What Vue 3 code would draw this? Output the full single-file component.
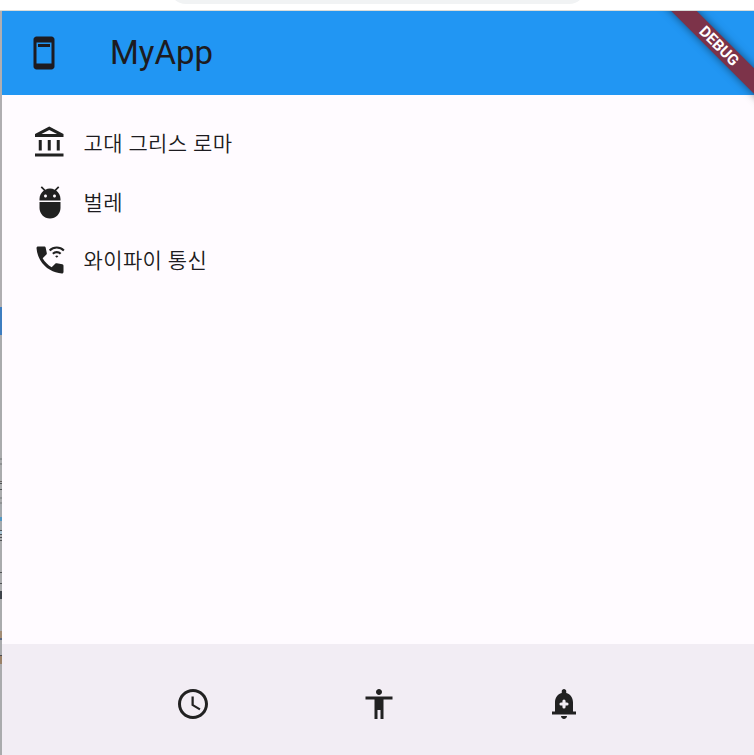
<script setup>
const rows = [
  { icon: 'bank', label: '고대 그리스 로마' },
  { icon: 'adb', label: '벌레' },
  { icon: 'call', label: '와이파이 통신' },
]
</script>

<template>
  <div class="window">
    <div class="chrome"><div class="address"></div></div>
    <div class="main">
      <div class="edge"></div>
      <div class="app">
        <header class="bar">
          <svg class="icon" viewBox="0 0 24 24"><path fill-rule="evenodd" d="M17 1H7c-1.1 0-2 .9-2 2v18c0 1.1.9 2 2 2h10c1.1 0 2-.9 2-2V3c0-1.1-.9-2-2-2zm0 18H7V5h10v14zM16 6H8v2h8V6z" /></svg>
          <h1>MyApp</h1>
        </header>
        <div class="ribbon-area"><div class="ribbon">DEBUG</div></div>
        <main class="content">
          <div v-for="row in rows" :key="row.icon" class="row" :class="row.icon">
            <svg v-if="row.icon === 'bank'" class="icon" viewBox="0 0 24 24"><path d="M6.5 10h-2v7h2v-7zm6 0h-2v7h2v-7zm8.5 9H2v2h19v-2zm-2.5-9h-2v7h2v-7zm-7-6.74L16.71 6H6.29l5.21-2.74m0-2.26L2 6v2h19V6l-9.5-5z" /></svg>
            <svg v-else-if="row.icon === 'adb'" class="icon" viewBox="0 0 24 24"><path d="M5 16c0 3.87 3.13 7 7 7s7-3.13 7-7v-4H5v4zM16.12 4.37l2.1-2.1-.82-.83-2.3 2.31C14.16 3.28 13.12 3 12 3s-2.16.28-3.09.75L6.6 1.44l-.82.83 2.1 2.1C6.14 5.64 5 7.68 5 10v1h14v-1c0-2.32-1.14-4.36-2.88-5.63zM9 9c-.55 0-1-.45-1-1s.45-1 1-1 1 .45 1 1-.45 1-1 1zm6 0c-.55 0-1-.45-1-1s.45-1 1-1 1 .45 1 1-.45 1-1 1z" /></svg>
            <svg v-else class="icon" viewBox="0 0 24 24">
              <path d="M15.63 14.4l-2.52 2.5c-2.5-1.43-4.57-3.5-6-6l2.5-2.52c.23-.24.33-.57.27-.9L9.13 3.8C9.04 3.34 8.63 3 8.15 3H4c-.56 0-1.03.47-1 1.03C3.17 6.92 4.05 9.63 5.43 12c1.58 2.73 3.85 4.99 6.57 6.57 2.37 1.37 5.08 2.26 7.97 2.43.56.03 1.03-.44 1.03-1v-4.15c0-.48-.34-.89-.8-.98l-3.67-.73c-.33-.07-.67.03-.9.26z" />
              <path class="line" d="M11.75 5.65a6.8 6.8 0 0 1 9.5 0M13.9 7.85a3.7 3.7 0 0 1 5.2 0" />
              <path d="M15.45 9.45a1.5 1.5 0 0 1 2.1 0L16.5 10.5z" />
            </svg>
            <span>{{ row.label }}</span>
          </div>
        </main>
        <footer class="bottom">
          <svg class="icon" viewBox="0 0 24 24"><path d="M11.99 2C6.47 2 2 6.48 2 12s4.47 10 9.99 10C17.52 22 22 17.52 22 12S17.52 2 11.99 2zM12 20c-4.42 0-8-3.58-8-8s3.58-8 8-8 8 3.58 8 8-3.58 8-8 8zm.5-13H11v6l5.25 3.15.75-1.23-4.5-2.67z" /></svg>
          <svg class="icon" viewBox="0 0 24 24"><path d="M12 2c1.1 0 2 .9 2 2s-.9 2-2 2-2-.9-2-2 .9-2 2-2zm9 7h-6v13h-2v-6h-2v6H9V9H3V7h18v2z" /></svg>
          <svg class="icon" viewBox="0 0 24 24">
            <path d="M12 22c1.1 0 2-.9 2-2h-4c0 1.1.9 2 2 2zM18 17v-6c0-3.07-1.64-5.64-4.5-6.32V3.5c0-.83-.67-1.5-1.5-1.5s-1.5.67-1.5 1.5v1.18C7.63 5.36 6 7.92 6 11v6H4v2h16v-2h-2z" />
            <path class="plus" d="M12 10v4M10 12h4" />
          </svg>
        </footer>
      </div>
    </div>
  </div>
</template>

<style>
body { margin: 0; overflow: hidden; }
</style>

<style scoped>
.window {
  width: 754px;
  height: 755px;
  display: flex;
  flex-direction: column;
  background: #fff;
  color: #1d1b20;
  font-family: Roboto, "Noto Sans CJK KR", sans-serif;
}
.chrome {
  height: 11px;
  box-sizing: border-box;
  border-bottom: 1px solid #d9dcd9;
  overflow: hidden;
  display: flex;
  align-items: flex-end;
  padding: 0 0 6px 169px;
}
.address {
  width: 417px;
  height: 34px;
  flex: none;
  border-radius: 17px;
  background: #f1f3f4;
}
.main { flex: 1; display: flex; min-height: 0; }
.edge {
  width: 2px;
  background: linear-gradient(
    #b0aeb1 0 296px, #3e7dc0 296px 324px, #aaabad 324px 447px,
    #8e9092 447px 449px, #aaabad 449px 452px, #8e9092 452px 454px,
    #aaabad 454px 470px, #66615f 470px 471px, #aaabad 471px 472px,
    #505255 472px 473px, #aaabad 473px 478px, #505255 478px 479px,
    #aaabad 479px 486px, #909294 486px 488px, #aaabad 488px 491px,
    #909294 491px 493px, #a5a9ad 493px 506px, #5296c2 506px 510px,
    #a5a9ad 510px 519px, #505255 519px 520px, #a5c0d0 520px 523px,
    #505255 523px 524px, #aaabad 524px 526px, #505255 526px 527px,
    #aaabad 527px 529px, #505255 529px 530px, #aaabad 530px 561px,
    #505255 561px 562px, #aaabad 562px 572px, #505255 572px 573px,
    #aaabad 573px 580px, #3f444b 580px 588px, #aaabad 588px 620px,
    #a28c75 620px 627px, #5d6880 627px 629px, #aaabad 629px 644px,
    #4d4d50 644px 645px, #9a8168 645px 653px, #aaabad 653px
  );
}
.app {
  flex: 1;
  position: relative;
  overflow: hidden;
  display: flex;
  flex-direction: column;
  background: #fffbff;
}
.bar {
  height: 84px;
  display: flex;
  align-items: center;
  gap: 48px;
  padding-left: 24px;
  background: #2196f3;
}
h1 { margin: 0; font-size: 33px; line-height: 42px; font-weight: 400; }
.icon { width: 36px; height: 36px; flex: none; display: block; fill: #1d1b20; }
.line { fill: none; stroke: #212121; stroke-width: 1.4; }
.plus { fill: none; stroke: #f2edf4; stroke-width: 2.1; stroke-linecap: round; }
/* Corner ribbon laid over the app bar */
.ribbon-area {
  position: absolute;
  top: 0;
  right: 0;
  width: 120px;
  height: 120px;
  overflow: hidden;
}
.ribbon {
  position: absolute;
  left: -15px;
  top: 26px;
  width: 200px;
  height: 18px;
  transform: rotate(45deg);
  background: #7c3349;
  box-shadow: 0 0 9px rgba(0, 0, 0, 0.5);
  color: #fff;
  text-align: center;
  font-size: 15.3px;
  line-height: 18px;
  font-weight: 700;
}
.content { flex: 1; padding: 30px; display: flex; flex-direction: column; }
.row {
  display: flex;
  align-items: center;
  gap: 15.5px;
  font-weight: 350;
  font-size: 21px;
  line-height: 30px;
  letter-spacing: 0.375px;
  height: 36px;
}
.row span { padding-top: 2px; }
.row .icon { fill: #212121; }
.adb { margin-top: 23px; }
.call { margin-top: 21.5px; }
.bottom {
  height: 111px;
  display: flex;
  align-items: center;
  gap: 149.4px;
  padding: 9px 0 0 173.2px;
  box-sizing: border-box;
  background: #f2edf4;
}
.bottom .icon { fill: #212121; }
</style>
